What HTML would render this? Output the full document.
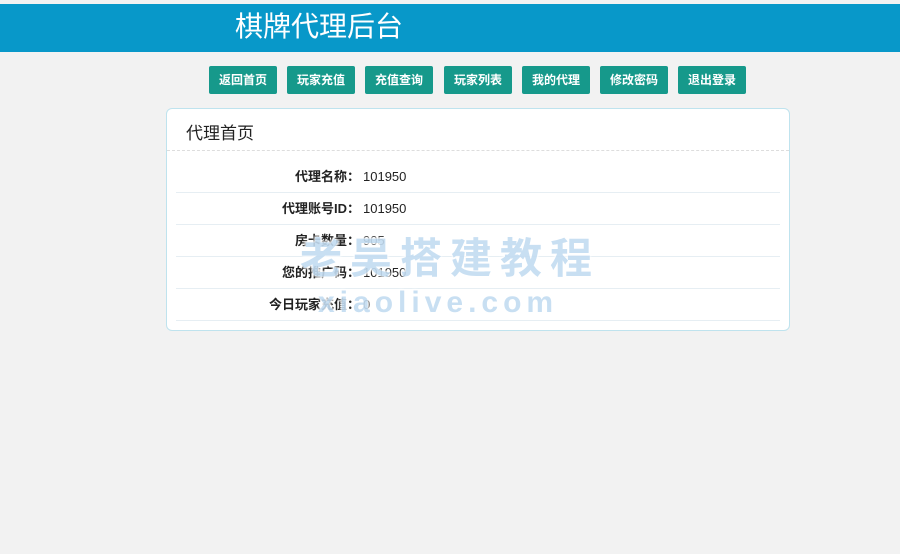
<!DOCTYPE html>
<html><head><meta charset="utf-8"><style>
*{margin:0;padding:0;box-sizing:border-box}
body{width:900px;height:554px;background:#f2f2f2;font-family:"Liberation Sans","Noto Sans CJK SC",sans-serif;position:relative;overflow:hidden}
.hd{position:absolute;left:0;top:4px;width:900px;height:48px;background:#0898c9}
.hd span{position:absolute;left:235px;top:5px;color:#fff;font-size:28px;line-height:36px}
.btn{position:absolute;top:66px;height:28px;width:68px;background:#16998b;color:#fff;font-size:12px;font-weight:bold;line-height:28px;text-align:center;border-radius:2px}
.panel{position:absolute;left:166px;top:108px;width:624px;height:223px;background:#fff;border:1px solid #bfe3ee;border-radius:6px}
.pt{position:absolute;left:19px;top:10px;font-size:17px;color:#222}
.dash{position:absolute;left:0;right:0;top:41px;border-top:1px dashed #ddd}
.row{position:absolute;left:9px;width:604px;height:32px;border-bottom:1px solid #e6eef3;font-size:13px;color:#222;line-height:32px}
.row b{position:absolute;right:420px;font-weight:bold;text-align:right}
.row i{position:absolute;left:187px;font-style:normal}
.wm{position:absolute;color:#c3dcf1;font-weight:bold;text-shadow:0 0 2px #fff,1px 1px 2px #fff,-1px -1px 2px #fff;opacity:.9}
</style></head><body>
<div class="hd"><span>棋牌代理后台</span></div>
<div class="btn" style="left:209px">返回首页</div>
<div class="btn" style="left:287px">玩家充值</div>
<div class="btn" style="left:365px">充值查询</div>
<div class="btn" style="left:444px">玩家列表</div>
<div class="btn" style="left:522px">我的代理</div>
<div class="btn" style="left:600px">修改密码</div>
<div class="btn" style="left:678px">退出登录</div>
<div class="panel">
<div class="pt">代理首页</div><div class="dash"></div>
<div class="row" style="top:52px"><b>代理名称：</b><i>101950</i></div>
<div class="row" style="top:84px"><b>代理账号ID：</b><i>101950</i></div>
<div class="row" style="top:116px"><b>房卡数量：</b><i>905</i></div>
<div class="row" style="top:148px"><b>您的推广码：</b><i>101950</i></div>
<div class="row" style="top:180px"><b>今日玩家充值：</b><i>0</i></div>
</div>
<div class="wm" style="left:300px;top:232px;font-size:42px;letter-spacing:8px;line-height:54px">老吴搭建教程</div>
<div class="wm" style="left:318px;top:286px;font-size:30px;letter-spacing:5px;line-height:34px">xiaolive.com</div>
</body></html>
